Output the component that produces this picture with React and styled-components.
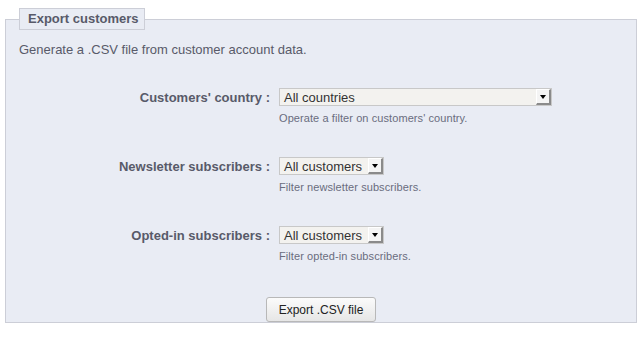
import React from "react";
import styled, { createGlobalStyle } from "styled-components";

const GlobalStyle = createGlobalStyle`
  body {
    margin: 0;
    background: #fff;
    font-family: "Liberation Sans", Arial, sans-serif;
  }
`;

const Fieldset = styled.fieldset`
  box-sizing: border-box;
  width: 632px;
  height: 315px;
  margin: 8px 0 0 5px;
  padding: 12px 13px 12px 13px;
  border: 1px solid #ccced7;
  background: #e9ecf4;
  min-width: 0;
`;

const Legend = styled.legend`
  padding: 3px 5px 3px 8px;
  border: 1px solid #ccced7;
  background: #e9ecf4;
  font-size: 13px;
  line-height: 14px;
  font-weight: bold;
  color: #585a69;
`;

const Description = styled.p`
  margin: 0 0 31px;
  font-size: 13px;
  line-height: 16px;
  color: #585a69;
`;

const Row = styled.div`
  display: grid;
  grid-template-columns: 251px 1fr;
  column-gap: 9px;
  row-gap: 4px;
  margin-bottom: 33px;
`;

const Label = styled.label`
  text-align: right;
  font-size: 13px;
  line-height: 18px;
  font-weight: bold;
  color: #585a69;
`;

const Select = styled.div`
  box-sizing: border-box;
  width: ${(p) => p.width}px;
  height: 18px;
  display: flex;
  align-items: center;
  justify-content: space-between;
  border: 1px solid #c8c8c8;
  background: #f3f2ef;
  font-size: 13px;
  color: #333;
  padding-left: 4px;
  margin-top: -1px;
`;

const Arrow = styled.span`
  box-sizing: border-box;
  width: 15px;
  height: 16px;
  background: #f4f4f4;
  border-top: 1px solid #fff;
  border-left: 1px solid #fff;
  border-right: 2px solid #8a8a8a;
  border-bottom: 2px solid #8a8a8a;
  display: flex;
  align-items: center;
  justify-content: center;

  &::after {
    content: "";
    border-left: 3px solid transparent;
    border-right: 3px solid transparent;
    border-top: 4px solid #000;
  }
`;

const Hint = styled.div`
  grid-column: 2;
  font-size: 11px;
  line-height: 14px;
  letter-spacing: 0.08px;
  color: #6a6d7e;
`;

const Actions = styled.div`
  display: flex;
  justify-content: center;
  padding-top: 1px;
`;

const Button = styled.button`
  box-sizing: border-box;
  width: 110px;
  height: 25px;
  border: 1px solid #b8b8b8;
  border-radius: 3px;
  background: linear-gradient(#fbfbfb, #e6e6e6);
  font-family: "Liberation Sans", Arial, sans-serif;
  font-size: 12px;
  color: #222;
  padding: 0;
`;

const fields = [
  {
    label: "Customers' country :",
    value: "All countries",
    width: 273,
    hint: "Operate a filter on customers' country.",
  },
  {
    label: "Newsletter subscribers :",
    value: "All customers",
    width: 105,
    hint: "Filter newsletter subscribers.",
  },
  {
    label: "Opted-in subscribers :",
    value: "All customers",
    width: 105,
    hint: "Filter opted-in subscribers.",
  },
];

const App = () => {
  return (
    <>
      <GlobalStyle />
      <Fieldset>
        <Legend>Export customers</Legend>
        <Description>Generate a .CSV file from customer account data.</Description>
        {fields.map((f) => (
          <Row key={f.label}>
            <Label>{f.label}</Label>
            <Select width={f.width}>
              {f.value}
              <Arrow />
            </Select>
            <Hint>{f.hint}</Hint>
          </Row>
        ))}
        <Actions>
          <Button>Export .CSV file</Button>
        </Actions>
      </Fieldset>
    </>
  );
};

export default App;
